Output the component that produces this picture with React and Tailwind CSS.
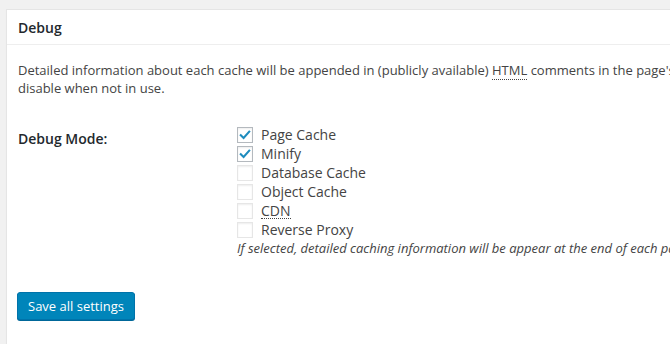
import React from 'react';

const options = [
  { label: 'Page Cache', checked: true },
  { label: 'Minify', checked: true },
  { label: 'Database Cache', checked: false },
  { label: 'Object Cache', checked: false },
  { label: 'CDN', checked: false, abbr: true },
  { label: 'Reverse Proxy', checked: false },
];

const Checkbox = ({ checked }) => (
  <span
    className={`w-4 h-4 shrink-0 flex items-center justify-center bg-white border ${
      checked ? 'border-[#b4b9be]' : 'border-[#e6e6e6]'
    } shadow-[inset_0_1px_2px_rgba(0,0,0,0.07)]`}
  >
    {checked && (
      <svg viewBox="0 0 16 16" className="w-[14px] h-[14px]">
        <path d="M3.2 8.2 L6.4 11.3 L12.8 4.2" fill="none" stroke="#1e8cbe" strokeWidth="2.4" strokeLinecap="square" />
      </svg>
    )}
  </span>
);

export default function App() {
  return (
    <div
      className="w-[670px] h-[344px] overflow-hidden bg-[#f1f1f1] text-[13px] text-[#444]"
      style={{ fontFamily: '"Open Sans", "Liberation Sans", sans-serif' }}
    >
      <div className="ml-[6px] mt-[9px] w-[720px] h-[400px] bg-white border border-[#e5e5e5] shadow-[0_1px_1px_rgba(0,0,0,0.04)]">
        {/* Header */}
        <div className="h-[35px] flex items-center px-[11px] border-b border-[#eee]">
          <h3 className="text-[14px] font-semibold text-[#23282d]">Debug</h3>
        </div>

        {/* Body */}
        <div className="px-[11px] pt-[16px]">
          <p className="leading-[18px] whitespace-nowrap">
            <span className="block">
              Detailed information about each cache will be appended in (publicly available){' '}
              <span className="border-b border-dotted border-[#444]">HTML</span> comments in the page's source code. Performance in this mode will not be optimal, use sparingly and
            </span>
            <span className="block">disable when not in use.</span>
          </p>

          <div className="flex mt-[28px]">
            <div className="w-[219px] shrink-0 pt-[4px] leading-[19px] text-[14px] font-semibold text-[#23282d]">Debug Mode:</div>
            <div className="flex flex-col min-w-0 text-[14px]">
              {options.map((o) => (
                <label key={o.label} className="flex items-center gap-[8px] h-[19px]">
                  <Checkbox checked={o.checked} />
                  {o.abbr ? (
                    <span className="leading-[15px] border-b border-dotted border-[#444]">{o.label}</span>
                  ) : (
                    <span>{o.label}</span>
                  )}
                </label>
              ))}
              <p className="italic text-[13px] leading-[19px] whitespace-nowrap text-[#444]">
                If selected, detailed caching information will be appear at the end of each page in a HTML comment.
              </p>
            </div>
          </div>

          <button className="-ml-px mt-[34px] h-[28px] px-[10px] rounded-[3px] bg-[#0085ba] border border-[#0073aa] shadow-[0_1px_0_#006799] text-white text-[13px] leading-[26px]">
            Save all settings
          </button>
        </div>
      </div>
    </div>
  );
}
